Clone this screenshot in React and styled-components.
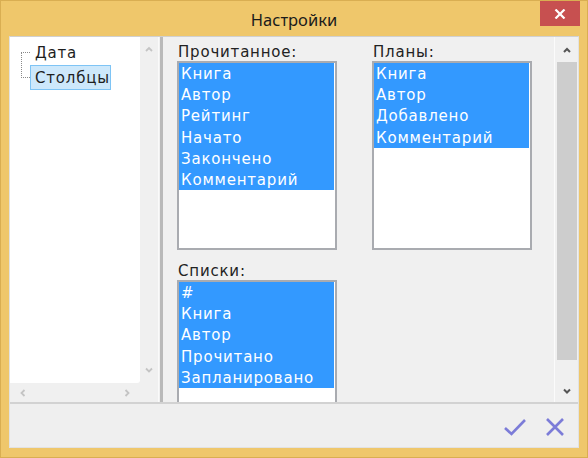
import React from "react";
import styled, { createGlobalStyle } from "styled-components";

const Global = createGlobalStyle`
  html, body { margin: 0; padding: 0; background: #fff; }
  body { font-family: "DejaVu Sans", "Liberation Sans", sans-serif; }
  * { box-sizing: border-box; }
`;

const Window = styled.div`
  width: 588px;
  height: 458px;
  background: #efc76b;
  border: 1px solid #d9ae52;
  display: flex;
  flex-direction: column;
  overflow: hidden;
`;

const TitleBar = styled.div`
  height: 35px;
  flex: none;
  display: flex;
  align-items: center;
  justify-content: center;
  position: relative;
  font-family: "Noto Sans", "Open Sans", sans-serif;
  font-size: 16.5px;
  color: #1b1b1b;
  padding-top: 1px;
`;

const CloseBtn = styled.div`
  position: absolute;
  top: 0;
  right: 7px;
  width: 40px;
  height: 25px;
  background: #c75050;
  display: flex;
  align-items: center;
  justify-content: center;
`;

const Client = styled.div`
  flex: 1;
  margin: 0 8px 9px 8px;
  display: flex;
  flex-direction: column;
  background: #f0f0f0;
  border: 1px solid #e2e2e2;
  border-top-color: #d0d0d0;
  overflow: hidden;
`;

const Main = styled.div`
  height: 365px;
  flex: none;
  display: flex;
`;

const TreePanel = styled.div`
  width: 148px;
  flex: none;
  display: grid;
  grid-template-columns: 1fr 18px;
  grid-template-rows: 1fr 19px;
  background: #f0f0f0;
`;

const TreeBody = styled.div`
  background: #fff;
  border-bottom-right-radius: 3px;
  position: relative;
  padding: 3px 0 0 11px;
  font-size: 15px;
  letter-spacing: 0.8px;
  color: #1e1e1e;
`;

const TreeRow = styled.div`
  display: flex;
  align-items: center;
  height: 25px;
`;

const Dots = styled.span`
  width: 9px;
  height: 1px;
  border-top: 1px dotted #8a8a8a;
  flex: none;
`;

const VDots = styled.div`
  position: absolute;
  left: 11px;
  top: 15px;
  height: 26px;
  border-left: 1px dotted #8a8a8a;
`;

const TreeLabel = styled.span`
  padding: 0 4px;
  height: 25px;
  line-height: 24px;
  border: 1px solid ${(p) => (p.$sel ? "#7ec4f5" : "transparent")};
  background: ${(p) => (p.$sel ? "#cde8fb" : "transparent")};
  width: ${(p) => (p.$sel ? "81px" : "auto")};
  white-space: nowrap;
  overflow: hidden;
`;

const VScroll = styled.div`
  display: flex;
  flex-direction: column;
  justify-content: space-between;
  align-items: center;
  padding: 7px 0 8px;
  background: #f0f0f0;
`;

const HScroll = styled.div`
  display: flex;
  justify-content: space-between;
  align-items: center;
  padding: 0 8px 0 8px;
`;

const Splitter = styled.div`
  flex: none;
  background: #f0f0f0;
  border-left: 1px solid #fafafa;
  border-right: 3px solid #b9b9b9;
  width: 5px;
`;

const Content = styled.div`
  flex: 1;
  display: flex;
  background: #f0f0f0;
  overflow: hidden;
`;

const Canvas = styled.div`
  flex: 1;
  padding: 5px 0 0 14px;
  display: grid;
  grid-template-columns: 160px 160px;
  column-gap: 35px;
  row-gap: 11px;
  align-content: start;
  overflow: hidden;
`;

const Group = styled.div`
  display: flex;
  flex-direction: column;
`;

const Label = styled.div`
  height: 19px;
  font-size: 15px;
  letter-spacing: 0.8px;
  line-height: 20px;
  color: #222;
  padding-left: 1px;
`;

const ListBox = styled.div`
  width: 160px;
  height: ${(p) => p.$h}px;
  background: #fff;
  border: 2px solid #a9abb0;
  padding: 0 1px 0 0;
  display: flex;
  flex-direction: column;
`;

const Item = styled.div`
  height: 21.2px;
  line-height: 22px;
  padding-left: 2px;
  font-size: 15px;
  letter-spacing: 0.8px;
  color: #fff;
  background: #3399ff;
  white-space: nowrap;
  overflow: hidden;
`;

const RightScroll = styled.div`
  width: 24px;
  flex: none;
  border-left: 1px solid #fbfbfb;
  display: flex;
  flex-direction: column;
  align-items: center;
  padding: 8px 0 6px;
`;

const Thumb = styled.div`
  width: 20px;
  margin-top: 7px;
  height: 298px;
  background: #cdcdcd;
`;

const Spacer = styled.div`
  flex: 1;
`;

const Footer = styled.div`
  flex: 1;
  border-top: 2px solid #d2d2d2;
  background: #efefef;
  display: flex;
  justify-content: flex-end;
  align-items: center;
  gap: 18px;
  padding: 2px 13px 0 0;
`;

const Chevron = ({ dir, color = "#c4c4c4", size = 10, w = 1.8 }) => {
  const paths = {
    up: "M2 7 L5 4 L8 7",
    down: "M2 3.5 L5 6.5 L8 3.5",
    left: "M6.5 2 L3.5 5 L6.5 8",
    right: "M3.5 2 L6.5 5 L3.5 8",
  };
  return (
    <svg width={size} height={size} viewBox="0 0 10 10">
      <path d={paths[dir]} fill="none" stroke={color} strokeWidth={w} />
    </svg>
  );
};

const List = ({ items, h }) => (
  <ListBox $h={h}>
    {items.map((t) => (
      <Item key={t}>{t}</Item>
    ))}
  </ListBox>
);

export default function App() {
  return (
    <>
      <Global />
      <Window>
        <TitleBar>
          Настройки
          <CloseBtn>
            <svg width="12" height="10" viewBox="0 0 12 10">
              <path d="M1.5 0.5 L10.5 9.5 M10.5 0.5 L1.5 9.5" stroke="#fff" strokeWidth="2.2" />
            </svg>
          </CloseBtn>
        </TitleBar>
        <Client>
          <Main>
            <TreePanel>
              <TreeBody>
                <VDots />
                <TreeRow>
                  <Dots />
                  <TreeLabel>Дата</TreeLabel>
                </TreeRow>
                <TreeRow>
                  <Dots />
                  <TreeLabel $sel>Столбцы</TreeLabel>
                </TreeRow>
              </TreeBody>
              <VScroll>
                <Chevron dir="up" />
                <Chevron dir="down" />
              </VScroll>
              <HScroll>
                <Chevron dir="left" />
                <Chevron dir="right" />
              </HScroll>
              <div />
            </TreePanel>
            <Splitter />
            <Content>
              <Canvas>
                <Group>
                  <Label>Прочитанное:</Label>
                  <List h={189} items={["Книга", "Автор", "Рейтинг", "Начато", "Закончено", "Комментарий"]} />
                </Group>
                <Group>
                  <Label>Планы:</Label>
                  <List h={189} items={["Книга", "Автор", "Добавлено", "Комментарий"]} />
                </Group>
                <Group>
                  <Label>Списки:</Label>
                  <List h={189} items={["#", "Книга", "Автор", "Прочитано", "Запланировано"]} />
                </Group>
              </Canvas>
              <RightScroll>
                <Chevron dir="up" color="#555" w={2} />
                <Thumb />
                <Spacer />
                <Chevron dir="down" color="#555" w={2} />
              </RightScroll>
            </Content>
          </Main>
          <Footer>
            <svg width="24" height="20" viewBox="0 0 24 20">
              <path d="M2 11 L8.5 17 L22 3" fill="none" stroke="#7c7cd8" strokeWidth="2.6" />
            </svg>
            <svg width="20" height="20" viewBox="0 0 20 20">
              <path d="M2 2 L18 18 M18 2 L2 18" fill="none" stroke="#7c7cd8" strokeWidth="2.6" />
            </svg>
          </Footer>
        </Client>
      </Window>
    </>
  );
}
